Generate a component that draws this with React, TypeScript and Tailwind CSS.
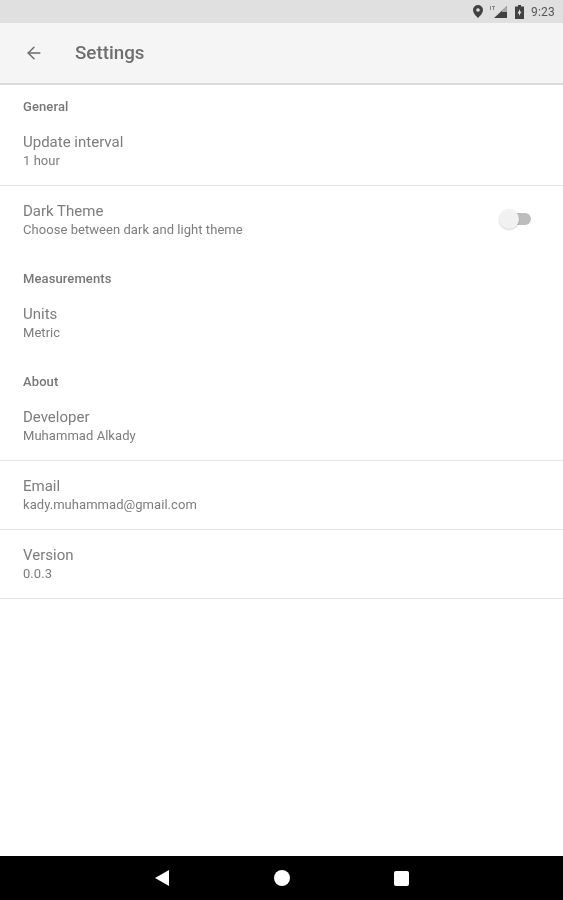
import { ArrowLeft } from 'lucide-react'

function SectionHeader({ title, first = false }: { title: string; first?: boolean }) {
  return (
    <div className={`px-[23px] text-[13px] leading-[16px] font-medium tracking-[0.1px] text-[#777777] ${first ? 'h-[32px] pt-[14px]' : 'h-[34px] pt-[16px]'}`}>
      {title}
    </div>
  )
}

function Row({ title, summary, divider = false, toggle = false }: { title: string; summary: string; divider?: boolean; toggle?: boolean }) {
  return (
    <div className={`h-[69px] pl-[23px] pr-[32px] pt-[15px] flex justify-between ${divider ? 'border-b border-[#e6e6e6]' : ''}`}>
      <div>
        <div className="text-[15px] leading-[20px] text-[#7d7d7d]">{title}</div>
        <div className="text-[13px] leading-[16px] mt-[1px] tracking-[0.05px] text-[#7d7d7d]">{summary}</div>
      </div>
      {toggle && (
        <div className="relative w-[32px] h-[20px] mt-[8px]">
          <div className="absolute right-0 top-[4px] w-[22px] h-[12px] rounded-full bg-[#bdbdbd]" />
          <div className="absolute left-0 top-0 w-[20px] h-[20px] rounded-full bg-[#f1f1f1] shadow-[0_1px_2px_rgba(0,0,0,0.18)]" />
        </div>
      )}
    </div>
  )
}

function App() {
  return (
    <div className="w-[563px] h-[900px] flex flex-col bg-white overflow-hidden blur-[0.35px]" style={{ fontFamily: 'Roboto, sans-serif' }}>
      {/* Status bar */}
      <div className="h-[23px] bg-[#e0e0e0] flex items-center justify-end pr-[8px] shrink-0">
        <svg width="10" height="13" viewBox="0 0 10 13" className="mr-[6px]">
          <path fill="#424242" fillRule="evenodd" d="M5 0a5 5 0 0 1 5 5c0 3-3 6-5 8-2-2-5-5-5-8a5 5 0 0 1 5-5zm0 3.200a1.800 1.800 0 1 0 0 3.600 1.800 1.800 0 0 0 0-3.600z" />
        </svg>
        <svg width="18" height="14" viewBox="0 0 18 14" className="mr-[8px]">
          <path fill="#424242" d="M18 1v12H5z" />
          <path fill="#a8a8a8" d="M18 1v6h-5v-2z" />
          <path fill="#8a8a8a" d="M1 1h1v4H1zM3 1h3v1H5v3H4V2H3z" />
        </svg>
        <svg width="9" height="14" viewBox="0 0 9 14" className="mr-[7px]">
          <path fill="#424242" d="M3 0h3v1.500h3V14H0V1.500h3z" />
          <path fill="#e0e0e0" d="M5 4 2.500 8.500H4V11l2.500-4.500H5z" />
        </svg>
        <span className="text-[12px] leading-[16px] tracking-[0.2px] text-[#555555]">9:23</span>
      </div>

      {/* Toolbar */}
      <header className="h-[62px] bg-[#f5f5f5] border-b-2 border-[#d9d9d9] flex items-center shrink-0">
        <ArrowLeft className="w-[20px] h-[20px] ml-[24px] text-[#6b6b6b]" strokeWidth={1.7} />
        <h1 className="ml-[31px] text-[18.8px] leading-[24px] font-medium text-[#6e6e6e]">Settings</h1>
      </header>

      <main className="flex-1">
        <SectionHeader title="General" first />
        <Row title="Update interval" summary="1 hour" divider />
        <Row title="Dark Theme" summary="Choose between dark and light theme" toggle />
        <SectionHeader title="Measurements" />
        <Row title="Units" summary="Metric" />
        <SectionHeader title="About" />
        <Row title="Developer" summary="Muhammad Alkady" divider />
        <Row title="Email" summary="kady.muhammad@gmail.com" divider />
        <Row title="Version" summary="0.0.3" divider />
      </main>

      {/* Navigation bar */}
      <nav className="h-[44px] bg-black flex items-center shrink-0 pl-[155px]">
        <svg width="14" height="16" viewBox="0 0 14 16">
          <path fill="#ffffff" d="M14 0v16L0 8z" />
        </svg>
        <div className="ml-[105px] w-[16px] h-[16px] rounded-full bg-white" />
        <div className="ml-[104px] w-[15px] h-[15px] rounded-[2px] bg-white" />
      </nav>
    </div>
  )
}

export default App
